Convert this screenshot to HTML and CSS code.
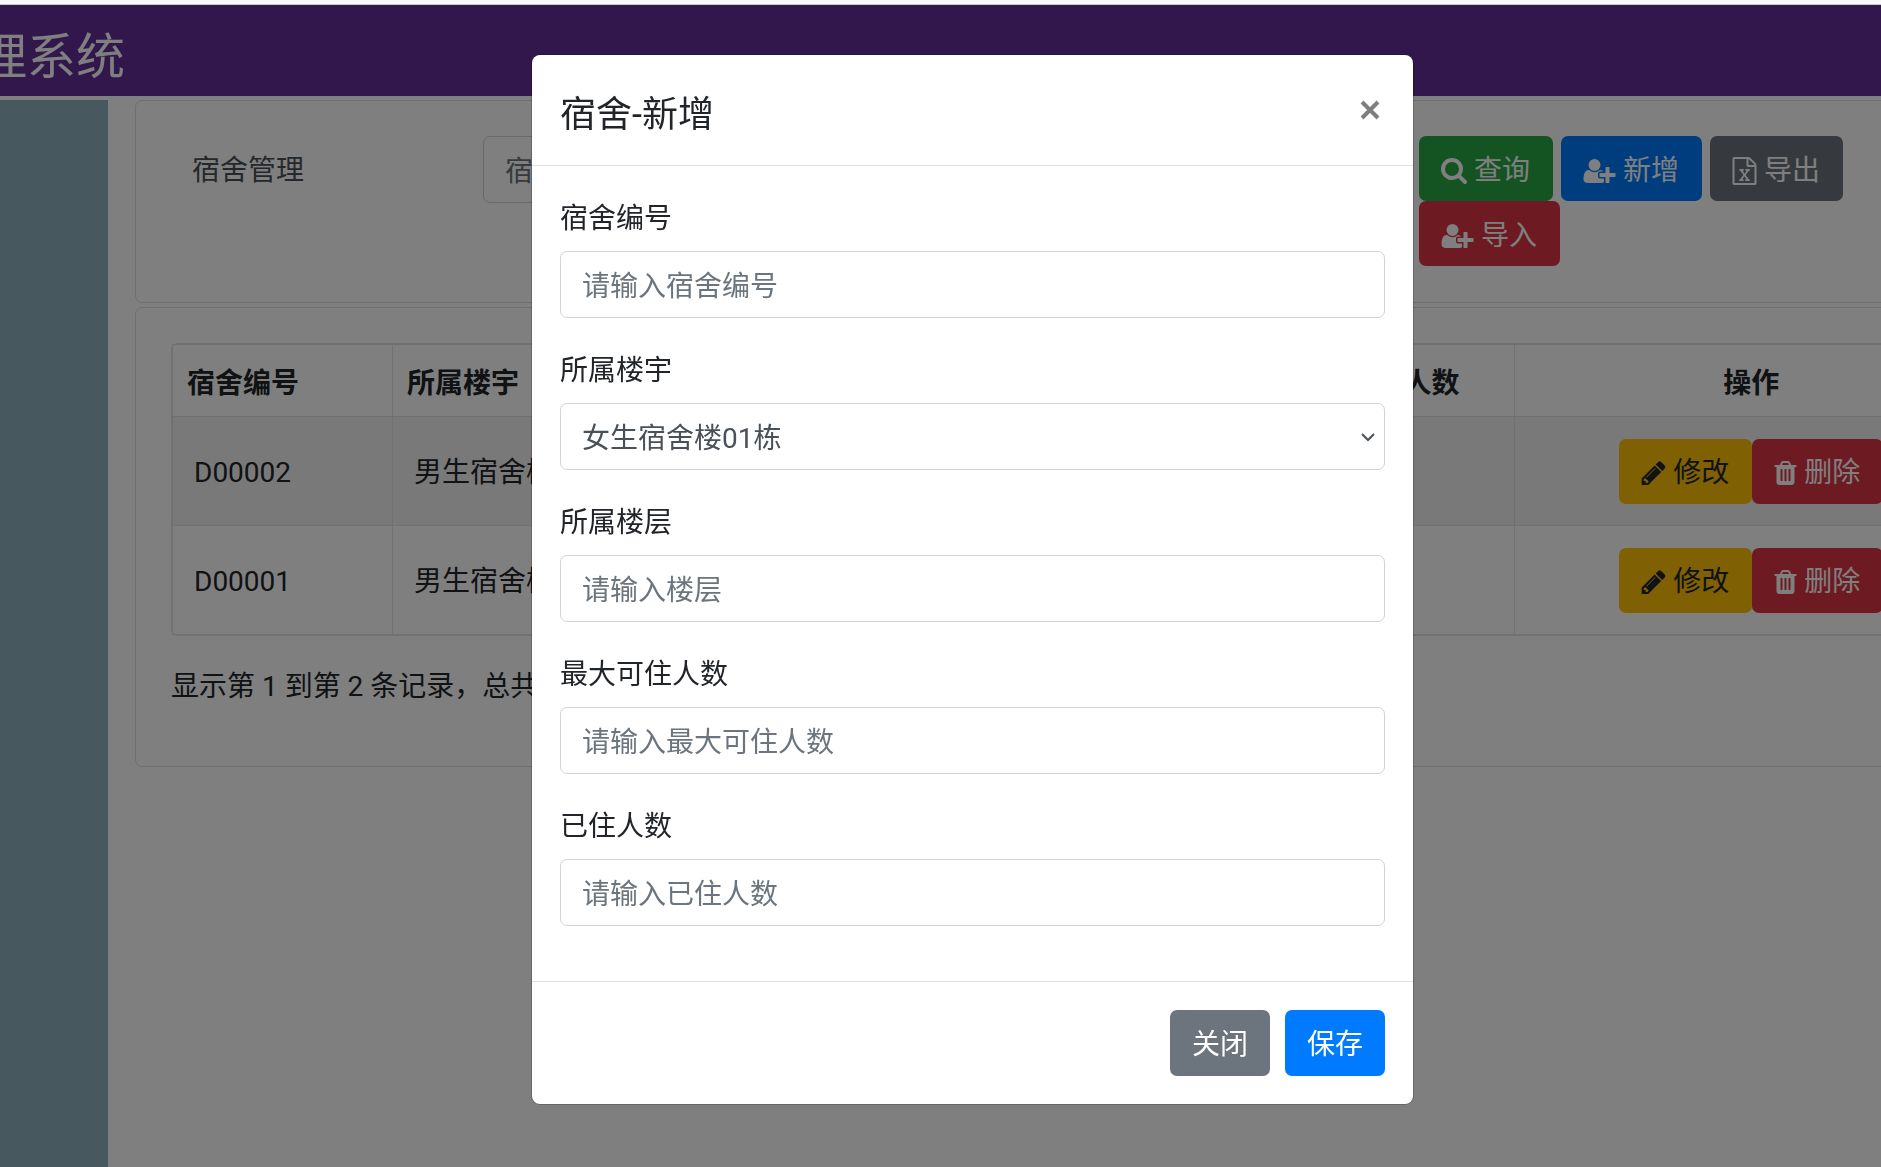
FILE: index.html
```
<!DOCTYPE html>
<html lang="zh-CN">
<head>
<meta charset="utf-8">
<title>宿舍管理</title>
<link rel="stylesheet" href="styles.css">
</head>
<body>
<svg class="sprite" aria-hidden="true">
  <symbol id="search" viewBox="0 128 1664 1664"><path d="M1152 832q0-185-131.500-316.500T704 384 387.500 515.500 256 832t131.500 316.500T704 1280t316.500-131.500T1152 832zm512 832q0 52-38 90t-90 38q-54 0-90-38l-343-342q-179 124-399 124-143 0-273.500-55.500t-225-150-150-225T0 832t55.500-273.500 150-225 225-150T704 128t273.500 55.500 225 150 150 225T1408 832q0 220-124 399l343 343q37 37 37 90z"/></symbol>
  <symbol id="user-plus" viewBox="0 128 2048 1536"><path d="M704 896q-159 0-271.500-112.500T320 512t112.500-271.500T704 128t271.500 112.500T1088 512 975.500 783.500 704 896zm960 128h352q13 0 22.500 9.500t9.500 22.500v192q0 13-9.500 22.500t-22.500 9.500h-352v352q0 13-9.500 22.500t-22.500 9.500h-192q-13 0-22.500-9.500t-9.500-22.500v-352h-352q-13 0-22.500-9.500t-9.500-22.500v-192q0-13 9.500-22.500t22.500-9.500h352V672q0-13 9.500-22.500t22.500-9.500h192q13 0 22.500 9.500t9.500 22.500v352zM928 1248q0 52 38 90t90 38h256v238q-68 50-171 50H267q-121 0-194-69T0 1405q0-53 3.500-103.500t14-109T44 1084t43-97.500 62-81 85.500-53.500T346 832q19 0 39 17 79 61 154.500 91.500T704 971t164.500-30.500T1023 849q20-17 39-17 132 0 217 96h-223q-52 0-90 38t-38 90v192z"/></symbol>
  <symbol id="excel" viewBox="0 0 1536 1792"><path d="M1468 380q28 28 48 76t20 88v1152q0 40-28 68t-68 28H96q-40 0-68-28t-28-68V96q0-40 28-68T96 0h896q40 0 88 20t76 48zM1024 136v376h376q-10-29-22-41l-313-313q-12-12-41-22zm384 1528V640H992q-40 0-68-28t-28-68V128H128v1536h1280z"/><path d="M429 1430v106h281v-106h-75l103-161q5-7 10-16.500t7.500-13.500 3.500-4h2q1 4 5 10 2 4 4.500 7.500t6 8 6.500 8.500l107 161h-76v106h291v-106h-68l-192-273 195-282h67V768H828v107h74l-103 159q-4 7-10 16.500t-9 13.500l-2 3h-2q-1-4-5-10-6-11-17-23l-106-159h76V768H434v107h68l189 272-194 283h-68z"/></symbol>
  <symbol id="pencil" viewBox="0 128 1515 1536"><path d="M363 1536l91-91-235-235-91 91v107h128v128h107zm523-928q0-22-22-22-10 0-17 7l-542 542q-7 7-7 17 0 22 22 22 10 0 17-7l542-542q7-7 7-17zm-54-192l416 416-832 832H0v-416zm683 96q0 53-37 90l-166 166-416-416 166-165q36-38 90-38 53 0 91 38l235 234q37 39 37 91z"/></symbol>
  <symbol id="trash" viewBox="0 128 1408 1536"><path d="M512 1376V672q0-14-9-23t-23-9h-64q-14 0-23 9t-9 23v704q0 14 9 23t23 9h64q14 0 23-9t9-23zm256 0V672q0-14-9-23t-23-9h-64q-14 0-23 9t-9 23v704q0 14 9 23t23 9h64q14 0 23-9t9-23zm256 0V672q0-14-9-23t-23-9h-64q-14 0-23 9t-9 23v704q0 14 9 23t23 9h64q14 0 23-9t9-23zM480 384h448l-48-117q-7-9-17-11H546q-10 2-17 11zm928 32v64q0 14-9 23t-23 9h-96v948q0 83-47 143.500t-113 60.500H288q-66 0-113-58.500T128 1464V512H32q-14 0-23-9t-9-23v-64q0-14 9-23t23-9h309l70-167q15-37 54-63t79-26h320q40 0 79 26t54 63l70 167h309q14 0 23 9t9 23z"/></symbol>
</svg>

<div class="browser-edge"></div>
<div class="page">
  <header class="topbar"><h1 class="brand">理系统</h1></header>
  <div class="layout">
    <aside class="sidebar"></aside>
    <main class="content">
      <form class="card search-card">
        <label class="search-label" for="keyword">宿舍管理</label>
        <div class="search-field"><input class="control" id="keyword" type="text" placeholder="宿舍编号"></div>
        <div class="search-actions">
          <button class="btn btn-success" type="button"><svg class="icon icon-search"><use href="#search"/></svg>查询</button>
          <button class="btn btn-primary" type="button"><svg class="icon icon-user"><use href="#user-plus"/></svg>新增</button>
          <button class="btn btn-secondary" type="button"><svg class="icon icon-excel"><use href="#excel"/></svg>导出</button>
          <button class="btn btn-danger" type="button"><svg class="icon icon-user"><use href="#user-plus"/></svg>导入</button>
        </div>
      </form>
      <section class="card list-card">
        <div class="table-frame">
          <table class="table">
            <colgroup><col class="col-code"><col><col class="col-count"><col class="col-actions"></colgroup>
            <thead>
              <tr><th>宿舍编号</th><th>所属楼宇</th><th>已住人数</th><th class="center">操作</th></tr>
            </thead>
            <tbody>
              <tr>
                <td>D00002</td><td>男生宿舍楼</td><td></td>
                <td class="actions-cell"><div class="row-actions">
                  <button class="btn btn-warning" type="button"><svg class="icon icon-pencil"><use href="#pencil"/></svg>修改</button>
                  <button class="btn btn-danger" type="button"><svg class="icon icon-trash"><use href="#trash"/></svg>删除</button>
                </div></td>
              </tr>
              <tr>
                <td>D00001</td><td>男生宿舍楼</td><td></td>
                <td class="actions-cell"><div class="row-actions">
                  <button class="btn btn-warning" type="button"><svg class="icon icon-pencil"><use href="#pencil"/></svg>修改</button>
                  <button class="btn btn-danger" type="button"><svg class="icon icon-trash"><use href="#trash"/></svg>删除</button>
                </div></td>
              </tr>
            </tbody>
          </table>
        </div>
        <p class="summary">显示第 1 到第 2 条记录，总共</p>
      </section>
    </main>
  </div>
</div>

<div class="backdrop">
  <div class="modal" role="dialog" aria-modal="true" aria-labelledby="modal-title">
    <div class="modal-header">
      <h2 class="modal-title" id="modal-title">宿舍-新增</h2>
      <button class="close" type="button" aria-label="关闭"><svg class="icon-close" viewBox="0 0 20 20"><path d="M2 2l16 16M18 2L2 18"/></svg></button>
    </div>
    <form class="modal-body" id="dorm-form">
      <div class="field"><label for="code">宿舍编号</label><input class="control" id="code" type="text" placeholder="请输入宿舍编号"></div>
      <div class="field">
        <label for="building">所属楼宇</label>
        <div class="select">
          <select class="control" id="building"><option>女生宿舍楼01栋</option></select>
          <svg class="chevron" viewBox="0 0 14 9"><path d="M1 1l6 6 6-6"/></svg>
        </div>
      </div>
      <div class="field"><label for="floor">所属楼层</label><input class="control" id="floor" type="text" placeholder="请输入楼层"></div>
      <div class="field"><label for="capacity">最大可住人数</label><input class="control" id="capacity" type="text" placeholder="请输入最大可住人数"></div>
      <div class="field"><label for="occupied">已住人数</label><input class="control" id="occupied" type="text" placeholder="请输入已住人数"></div>
    </form>
    <div class="modal-footer">
      <button class="btn btn-secondary" type="button">关闭</button>
      <button class="btn btn-primary" type="submit" form="dorm-form">保存</button>
    </div>
  </div>
</div>
</body>
</html>
```

FILE: styles.css
```
* { box-sizing: border-box; }

body {
  margin: 0;
  height: 100vh;
  display: flex;
  flex-direction: column;
  overflow: hidden;
  background: #fff;
  color: #212529;
  font-family: Roboto, "Noto Sans CJK SC", sans-serif;
  font-size: 28px;
  line-height: 42px;
}

.sprite { position: absolute; width: 0; height: 0; }

.browser-edge {
  flex: none;
  height: 5px;
  background: #f7f8fa;
  border-bottom: 1px solid #c8c9cc;
}

.page { flex: 1; display: flex; flex-direction: column; }

/* The page is scrolled sideways, so the title and the cards run past the window. */
.topbar { background: #642f98; padding: 21px 0 7px; margin-bottom: 4px; }
.brand {
  margin: 0 0 0 -22px;
  color: #fff;
  font-size: 49px;
  font-weight: 400;
  line-height: 63px;
}

.layout { flex: 1; display: flex; }
.sidebar { flex: none; width: 108px; background: #91b0be; }
.content {
  flex: 1;
  min-width: 0;
  margin: 0 -144px 0 27px;
  display: flex;
  flex-direction: column;
  gap: 4px;
}

.card { border: 1px solid #dfdfdf; border-radius: 7px; }
.search-card { display: flex; align-items: flex-start; padding: 35px 56px 36px; }
.search-label { flex: none; width: 291px; padding: 14px 0 10px; color: #495057; }
.search-field { flex: 1; }
.search-actions {
  flex: none;
  width: 549px;
  margin-left: 30px;
  display: flex;
  flex-wrap: wrap;
  column-gap: 8px;
}

.control {
  display: block;
  width: 100%;
  height: 67px;
  margin: 0;
  padding: 13px 21px 9px;
  border: 1px solid #ced4da;
  border-radius: 7px;
  background: #fff;
  color: #495057;
  font: inherit;
}
.control::placeholder { color: #6c757d; opacity: 1; }

.btn {
  display: inline-flex;
  align-items: center;
  gap: 7px;
  height: 65px;
  padding: 4px 22px 0 21px;
  border: 1px solid transparent;
  border-radius: 7px;
  color: #fff;
  font: inherit;
  white-space: nowrap;
}
.btn-success { background-color: #28a745; }
.btn-primary { background-color: #007bff; }
.btn-secondary { background-color: #6c757d; }
.btn-danger { background-color: #dc3545; }
.btn-warning { background-color: #ffc107; color: #212529; }

.icon { flex: none; fill: currentColor; height: 24px; }
.icon-search { width: 26px; height: 26px; }
.icon-user { width: 33px; }
.icon-excel { width: 25px; height: 28px; }
.icon-pencil { width: 25px; }
.icon-trash { width: 23px; }

.list-card { padding: 35px 35px 28px; }
.table-frame { border: 1px solid #dee2e6; border-radius: 7px; }
.table {
  width: 100%;
  table-layout: fixed;
  border-collapse: collapse;
  outline: 1px solid #dee2e6;
  outline-offset: -1px;
}
.col-code { width: 220px; }
.col-count { width: 181px; }
.col-actions { width: 474px; }
.table th, .table td { border-left: 1px solid #dee2e6; border-top: 1px solid #dee2e6; text-align: left; }
.table th { height: 72px; padding: 6px 14px 0; font-weight: 700; }
.table .center { text-align: center; }
.table td { height: 109px; padding: 4px 21px 0; }
.table .actions-cell { padding: 0 22px; }
.table tbody tr:first-child { background: #f2f2f2; }
.row-actions { display: flex; justify-content: center; }
.summary { margin: 30px 0; }

.backdrop {
  position: fixed;
  inset: 5px 0 0;
  padding: 50px 0 50px 64px;
  background: rgba(0, 0, 0, 0.5);
}
.modal {
  max-width: 881px;
  margin: 0 auto;
  border-radius: 8px;
  background: #fff;
  box-shadow: 0 0 0 1px rgba(0, 0, 0, 0.2);
}
.modal-header {
  display: flex;
  justify-content: space-between;
  align-items: flex-start;
  padding: 28px;
  border-bottom: 1px solid #dee2e6;
}
.modal-title { margin: 0; padding-top: 10px; font-size: 36px; font-weight: 400; line-height: 44px; }
.close { padding: 17px 5px; border: 0; background: none; }
.icon-close { display: block; width: 20px; height: 20px; fill: none; stroke: #7f7f7f; stroke-width: 4; }

.modal-body { padding: 28px 28px 27px; }
.field { margin-bottom: 28px; }
.field label { display: block; margin-bottom: 8px; line-height: 49px; }
.select { position: relative; }
.select .control { appearance: none; padding-right: 60px; }
.chevron {
  position: absolute;
  right: 10px;
  top: 30px;
  width: 14px;
  height: 9px;
  fill: none;
  stroke: #495057;
  stroke-width: 2;
  pointer-events: none;
}

.modal-footer {
  display: flex;
  justify-content: flex-end;
  gap: 15px;
  padding: 28px;
  border-top: 1px solid #dee2e6;
}
.modal-footer .btn { height: 66px; padding: 4px 21px 0; }
```
